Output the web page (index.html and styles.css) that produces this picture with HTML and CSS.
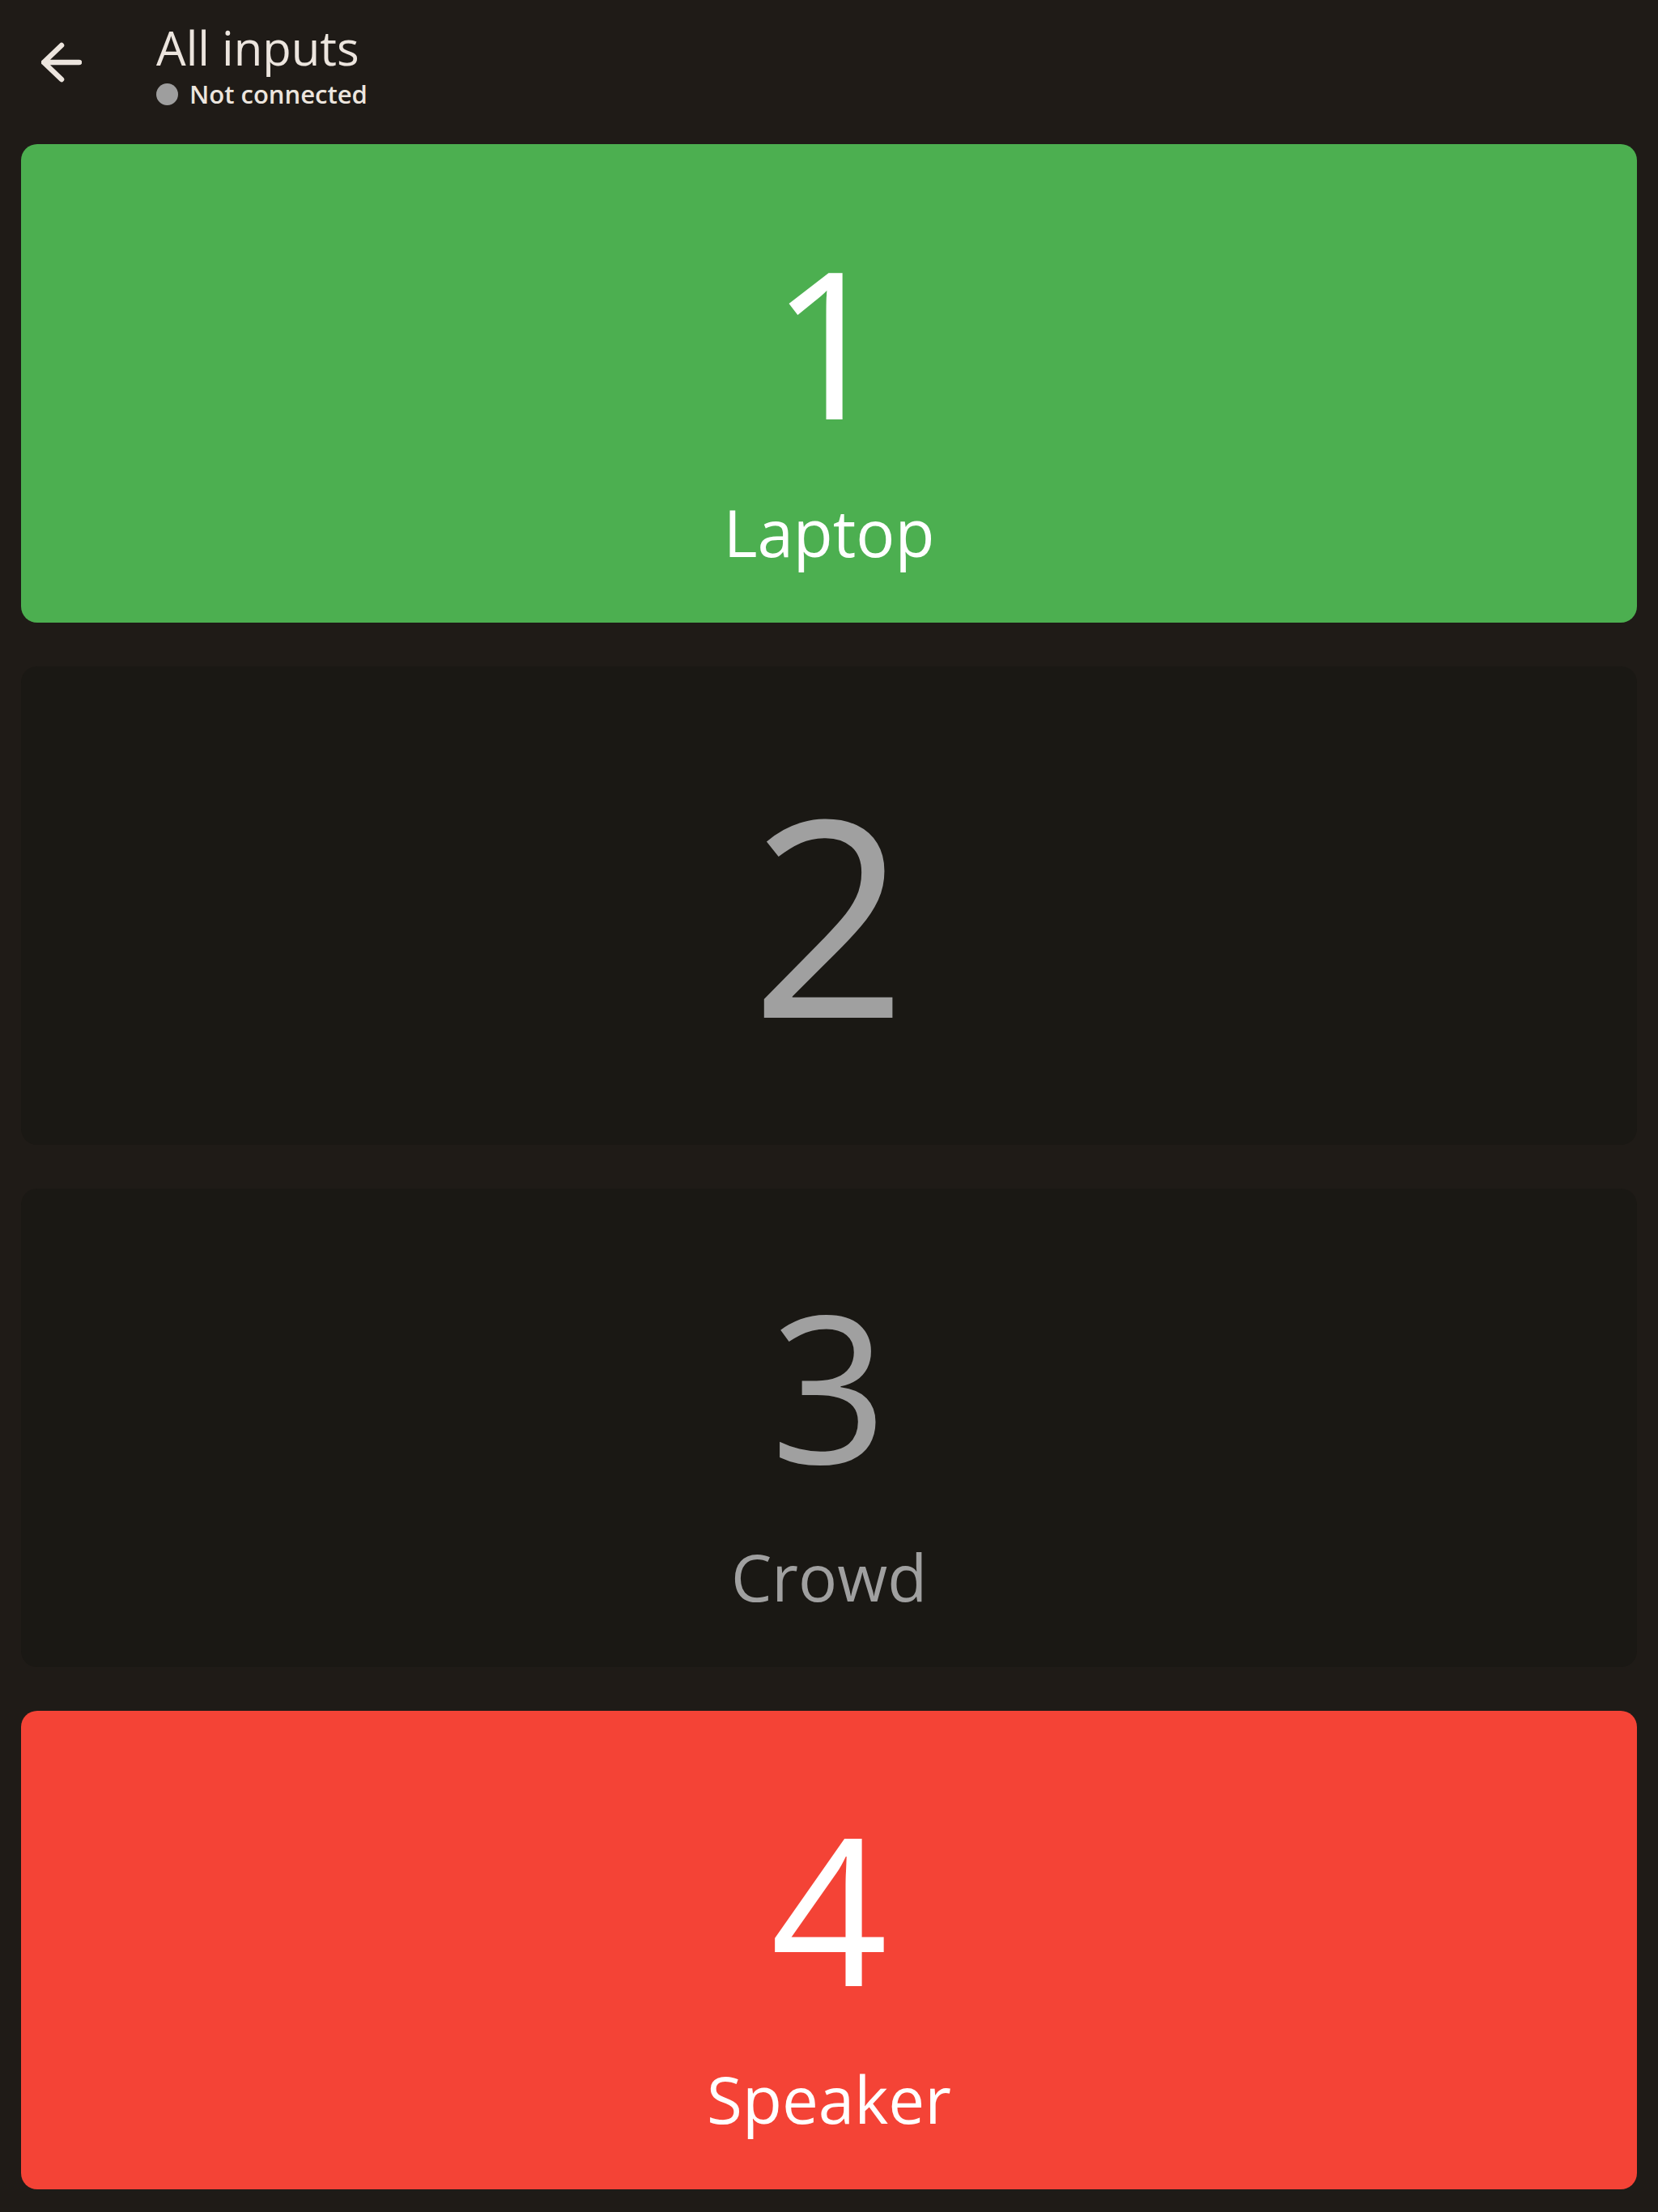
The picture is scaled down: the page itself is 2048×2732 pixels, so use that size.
FILE: index.html
```html
<!DOCTYPE html>
<html lang="en">
<head>
<meta charset="utf-8">
<title>All inputs</title>
<link rel="stylesheet" href="styles.css">
</head>
<body>
<div class="app">
  <header class="topbar">
    <button class="back" aria-label="Back">
      <svg viewBox="0 0 50 50" width="50" height="50">
        <path d="M3 25 H47 M25 4 L3 25 L25 46" fill="none" stroke="#ece5de" stroke-width="6.5" stroke-linecap="round" stroke-linejoin="round"/>
      </svg>
    </button>
    <div class="titles">
      <div class="title">All inputs</div>
      <div class="status"><span class="dot"></span><span class="status-text">Not connected</span></div>
    </div>
  </header>
  <main class="inputs">
    <div class="card card-green">
      <div class="num">1</div>
      <div class="label">Laptop</div>
    </div>
    <div class="card card-dark">
      <div class="num num-big">2</div>
    </div>
    <div class="card card-dark">
      <div class="num">3</div>
      <div class="label">Crowd</div>
    </div>
    <div class="card card-red">
      <div class="num">4</div>
      <div class="label">Speaker</div>
    </div>
  </main>
</div>
</body>
</html>
```
FILE: styles.css
```css
* { box-sizing: border-box; }
html, body {
  margin: 0;
  padding: 0;
  background: #1f1b17;
}
body {
  font-family: "Open Sans", "Noto Sans", sans-serif;
  color: #ece5de;
}
.app {
  width: 2048px;
  height: 2732px;
  display: flex;
  flex-direction: column;
}
.topbar {
  height: 178px;
  flex: 0 0 178px;
  display: flex;
  align-items: flex-start;
  padding-top: 26px;
}
.back {
  width: 50px;
  height: 50px;
  margin-left: 51px;
  margin-top: 26px;
  padding: 0;
  border: 0;
  background: transparent;
  display: flex;
}
.titles {
  margin-left: 92px;
  display: flex;
  flex-direction: column;
}
.title {
  font-size: 58px;
  line-height: 66px;
  font-weight: 400;
  color: #ece5de;
}
.status {
  margin-top: 6px;
  display: flex;
  align-items: center;
  gap: 14px;
  height: 36px;
}
.dot {
  width: 27px;
  height: 27px;
  border-radius: 50%;
  background: #9e9e9e;
  margin-top: 1px;
}
.status-text {
  font-size: 31px;
  line-height: 36px;
  font-weight: 600;
  color: #ece5de;
}
.inputs {
  flex: 1;
  display: flex;
  flex-direction: column;
  gap: 54px;
  padding: 0 26px 28px 26px;
}
.card {
  flex: 1 1 0;
  min-height: 0;
  border-radius: 20px;
  display: flex;
  flex-direction: column;
  align-items: center;
  justify-content: center;
}
.card-green { background: #4caf50; color: #ffffff; }
.card-red { background: #f44336; color: #ffffff; }
.card-dark { background: #1a1814; color: #a0a0a0; }
.num {
  font-size: 253px;
  line-height: 365px;
  font-weight: 400;
}
.num-big {
  font-size: 339px;
  line-height: 400px;
  margin-top: 14px;
}
.label {
  font-size: 80px;
  line-height: 107px;
  font-weight: 400;
}
```
